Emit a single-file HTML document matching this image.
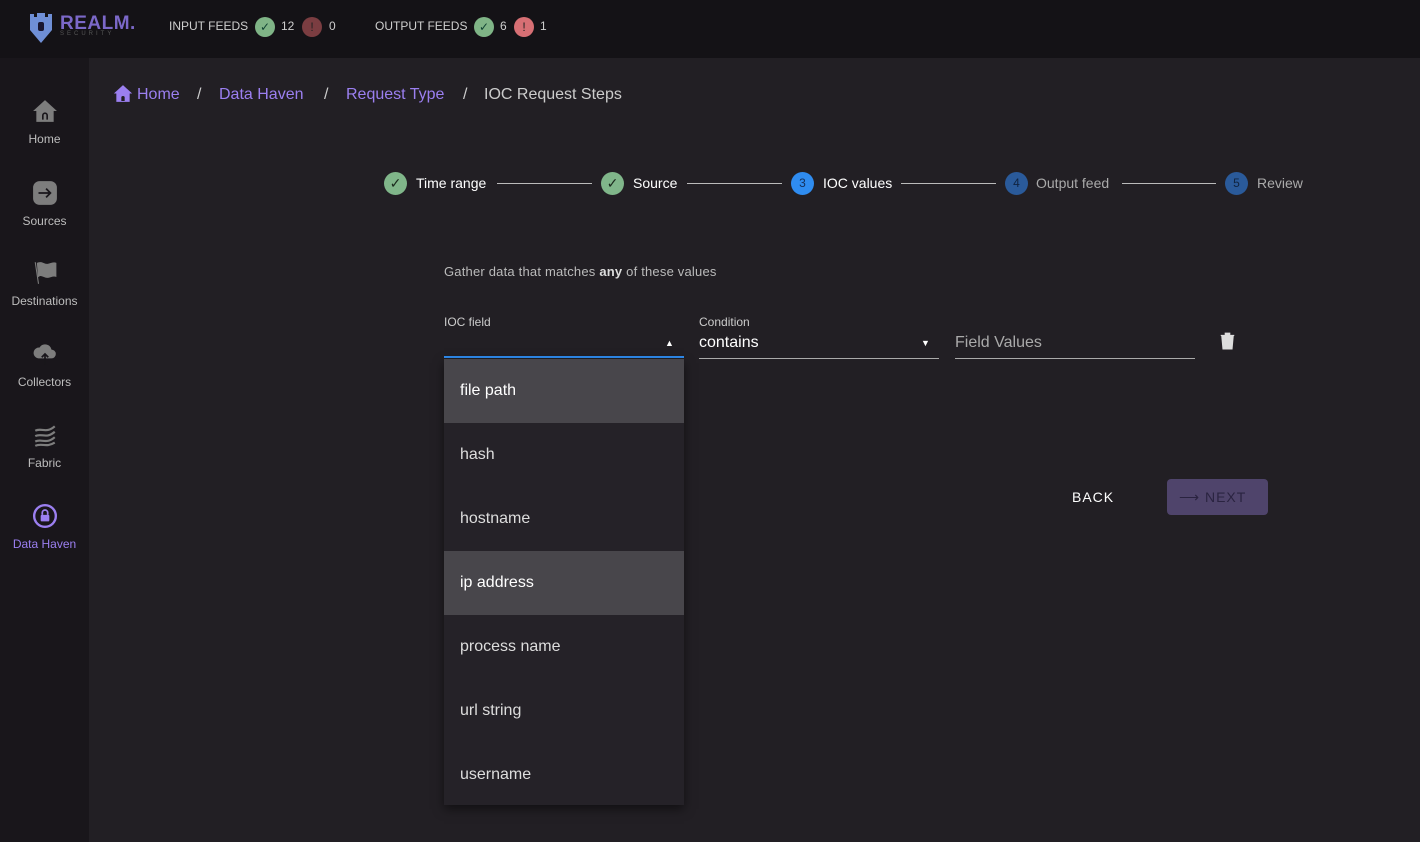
<!DOCTYPE html>
<html><head><style>
*{margin:0;padding:0;box-sizing:border-box}
body{width:1420px;height:842px;overflow:hidden;background:#221f24;font-family:"Liberation Sans",sans-serif;color:#e6e6e6;position:relative}
.top{position:absolute;left:0;top:0;width:1420px;height:58px;background:#141216}
.side{position:absolute;left:0;top:58px;width:89px;height:784px;background:#19161b}
.ab{position:absolute;white-space:nowrap}
.nav{position:absolute;left:0;width:89px;text-align:center;font-size:12px;color:#bdbdbd}
.nav svg{display:block;margin:0 auto 8px}
.circ{position:absolute;border-radius:50%;text-align:center}
.sc{width:23px;height:23px;line-height:23px;font-size:12px;top:172px}
.st{top:175px;font-size:14px}
.ln{position:absolute;top:183px;height:1px;background:#bbb}
.menu div{height:64px;line-height:64px;padding-left:16px;font-size:16px;color:#ddd}
</style></head><body>
<div class="top"></div>
<div class="side"></div>
<svg class="ab" style="left:26px;top:10px" width="30" height="34" viewBox="0 0 30 34"><path d="M4 4h4v3h3V3h8v4h3V4h4v16l-11 13L4 20z" fill="#6f8fd6"/><rect x="12" y="12" width="6" height="9" rx="2" fill="#1a1730"/></svg>
<div class="ab" style="left:60px;top:13px;font-size:19px;font-weight:bold;color:#7b68c8;letter-spacing:0.5px">REALM.</div>
<div class="ab" style="left:60px;top:31px;font-size:6px;color:#555;letter-spacing:3px">SECURITY</div>
<div class="ab" style="left:169px;top:19px;font-size:12px;color:#cfcfcf">INPUT FEEDS</div>
<div class="circ" style="left:255px;top:17px;width:20px;height:20px;line-height:20px;font-size:12px;background:#7fb486;color:#143">✓</div>
<div class="ab" style="left:281px;top:19px;font-size:12px;color:#cfcfcf">12</div>
<div class="circ" style="left:302px;top:17px;width:20px;height:20px;line-height:20px;font-size:12px;background:#7b3d41;color:#222">!</div>
<div class="ab" style="left:329px;top:19px;font-size:12px;color:#cfcfcf">0</div>
<div class="ab" style="left:375px;top:19px;font-size:12px;color:#cfcfcf">OUTPUT FEEDS</div>
<div class="circ" style="left:474px;top:17px;width:20px;height:20px;line-height:20px;font-size:12px;background:#7fb486;color:#143">✓</div>
<div class="ab" style="left:500px;top:19px;font-size:12px;color:#cfcfcf">6</div>
<div class="circ" style="left:514px;top:17px;width:20px;height:20px;line-height:20px;font-size:12px;background:#d76f74;color:#222">!</div>
<div class="ab" style="left:540px;top:19px;font-size:12px;color:#cfcfcf">1</div>
<div class="nav" style="top:98px"><svg width="26" height="26" viewBox="0 0 24 24"><path d="M12 2L1 12h3v10h16V12h3z" fill="#7d7d7d"/><path d="M10 20v-4a2 2 0 014 0v4" fill="none" stroke="#19161b" stroke-width="1.5"/></svg>Home</div>
<div class="nav" style="top:180px"><svg width="26" height="26" viewBox="0 0 24 24"><rect x="1" y="1" width="22" height="22" rx="6" fill="#7d7d7d"/><path d="M6 12h11M13 8l4 4-4 4" fill="none" stroke="#19161b" stroke-width="1.6"/></svg>Sources</div>
<div class="nav" style="top:260px"><svg width="26" height="26" viewBox="0 0 24 24"><path d="M3 2l3 20M5 3c5-2 6 2 10 1s5-2 7-1v12c-3-1-5 1-8 1s-5-3-8-1z" fill="#7d7d7d" stroke="#7d7d7d"/></svg>Destinations</div>
<div class="nav" style="top:341px"><svg width="26" height="26" viewBox="0 0 24 24"><path d="M6 16a5 5 0 011-10 6 6 0 0111 2 4 4 0 010 8z" fill="#7d7d7d"/><path d="M12 22v-9M9 15l3-3 3 3" stroke="#19161b" stroke-width="1.6" fill="none"/></svg>Collectors</div>
<div class="nav" style="top:422px"><svg width="26" height="26" viewBox="0 0 24 24"><path d="M3 8c6-3 10 3 18-4M3 13c6-3 10 3 18-4M3 18c6-3 10 3 18-4M3 22c6-3 10 2 18-3" stroke="#7d7d7d" stroke-width="2" fill="none"/></svg>Fabric</div>
<div class="nav" style="top:503px;color:#9b7ff0"><svg width="26" height="26" viewBox="0 0 24 24"><circle cx="12" cy="12" r="10" fill="none" stroke="#9b7ff0" stroke-width="2.2"/><rect x="8" y="11" width="8" height="6" rx="1" fill="#9b7ff0"/><path d="M9.5 11V9a2.5 2.5 0 015 0v2" stroke="#9b7ff0" stroke-width="1.6" fill="none"/></svg>Data Haven</div>
<svg class="ab" style="left:113px;top:84px" width="20" height="19" viewBox="0 0 24 22"><path d="M12 1L1 11h3v10h16V11h3z" fill="#9b7ff0"/><path d="M10 20v-4a2 2 0 014 0v4" fill="#221f24"/></svg>
<div class="ab" style="left:137px;top:86px;font-size:16px;color:#9b7ff0">Home</div>
<div class="ab" style="left:197px;top:86px;font-size:16px;color:#ccc">/</div>
<div class="ab" style="left:219px;top:86px;font-size:16px;color:#9b7ff0">Data Haven</div>
<div class="ab" style="left:324px;top:86px;font-size:16px;color:#ccc">/</div>
<div class="ab" style="left:346px;top:86px;font-size:16px;color:#9b7ff0">Request Type</div>
<div class="ab" style="left:463px;top:86px;font-size:16px;color:#ccc">/</div>
<div class="ab" style="left:484px;top:86px;font-size:16px;color:#ccc">IOC Request Steps</div>
<div class="circ sc" style="left:384px;background:#80b68a;color:#1b2b1e;font-size:14px">✓</div>
<div class="ab st" style="left:416px;color:#fff">Time range</div>
<div class="ln" style="left:497px;width:95px"></div>
<div class="circ sc" style="left:601px;background:#80b68a;color:#1b2b1e;font-size:14px">✓</div>
<div class="ab st" style="left:633px;color:#fff">Source</div>
<div class="ln" style="left:687px;width:95px"></div>
<div class="circ sc" style="left:791px;background:#2f8cf0;color:#15305a">3</div>
<div class="ab st" style="left:823px;color:#fff">IOC values</div>
<div class="ln" style="left:901px;width:95px"></div>
<div class="circ sc" style="left:1005px;background:#2a5a9a;color:#10233f">4</div>
<div class="ab st" style="left:1036px;color:#aaa">Output feed</div>
<div class="ln" style="left:1122px;width:94px"></div>
<div class="circ sc" style="left:1225px;background:#2a5a9a;color:#10233f">5</div>
<div class="ab st" style="left:1257px;color:#aaa">Review</div>
<div class="ab" style="left:444px;top:264px;font-size:13px;color:#bbb;letter-spacing:0.2px">Gather data that matches <b style="color:#ddd">any</b> of these values</div>
<div class="ab" style="left:444px;top:315px;font-size:12px;color:#ccc">IOC field</div>
<div class="ab" style="left:444px;top:356px;width:240px;height:2px;background:#2f8cf0"></div>
<div class="ab" style="left:665px;top:338px;font-size:9px;color:#fff">▲</div>
<div class="ab" style="left:699px;top:315px;font-size:12px;color:#ccc">Condition</div>
<div class="ab" style="left:699px;top:334px;font-size:16px;color:#fff">contains</div>
<div class="ab" style="left:921px;top:338px;font-size:9px;color:#fff">▼</div>
<div class="ab" style="left:699px;top:358px;width:240px;height:1px;background:#aaa"></div>
<div class="ab" style="left:955px;top:334px;font-size:16px;color:#aaa">Field Values</div>
<div class="ab" style="left:955px;top:358px;width:240px;height:1px;background:#aaa"></div>
<svg class="ab" style="left:1219px;top:332px" width="17" height="18" viewBox="0 0 14 16"><path d="M1 3h12M5 3V1h4v2M2 4h10l-1 11H3z" fill="#ddd" stroke="#ddd" stroke-width="1"/></svg>
<div class="ab" style="left:1072px;top:489px;font-size:14px;color:#fff;letter-spacing:1px">BACK</div>
<div class="ab" style="left:1167px;top:479px;width:101px;height:36px;background:#4f446b;border-radius:4px;color:#2a2340;font-size:14px;letter-spacing:1px;line-height:36px;padding-left:12px">⟶ NEXT</div>
<div class="ab menu" style="left:444px;top:359px;width:240px;height:446px;background:#252228;box-shadow:0 4px 10px rgba(0,0,0,.5)">
<div style="background:#48464b;color:#fff">file path</div><div>hash</div><div>hostname</div><div style="background:#48464b;color:#fff">ip address</div><div>process name</div><div>url string</div><div>username</div></div>
</body></html>
